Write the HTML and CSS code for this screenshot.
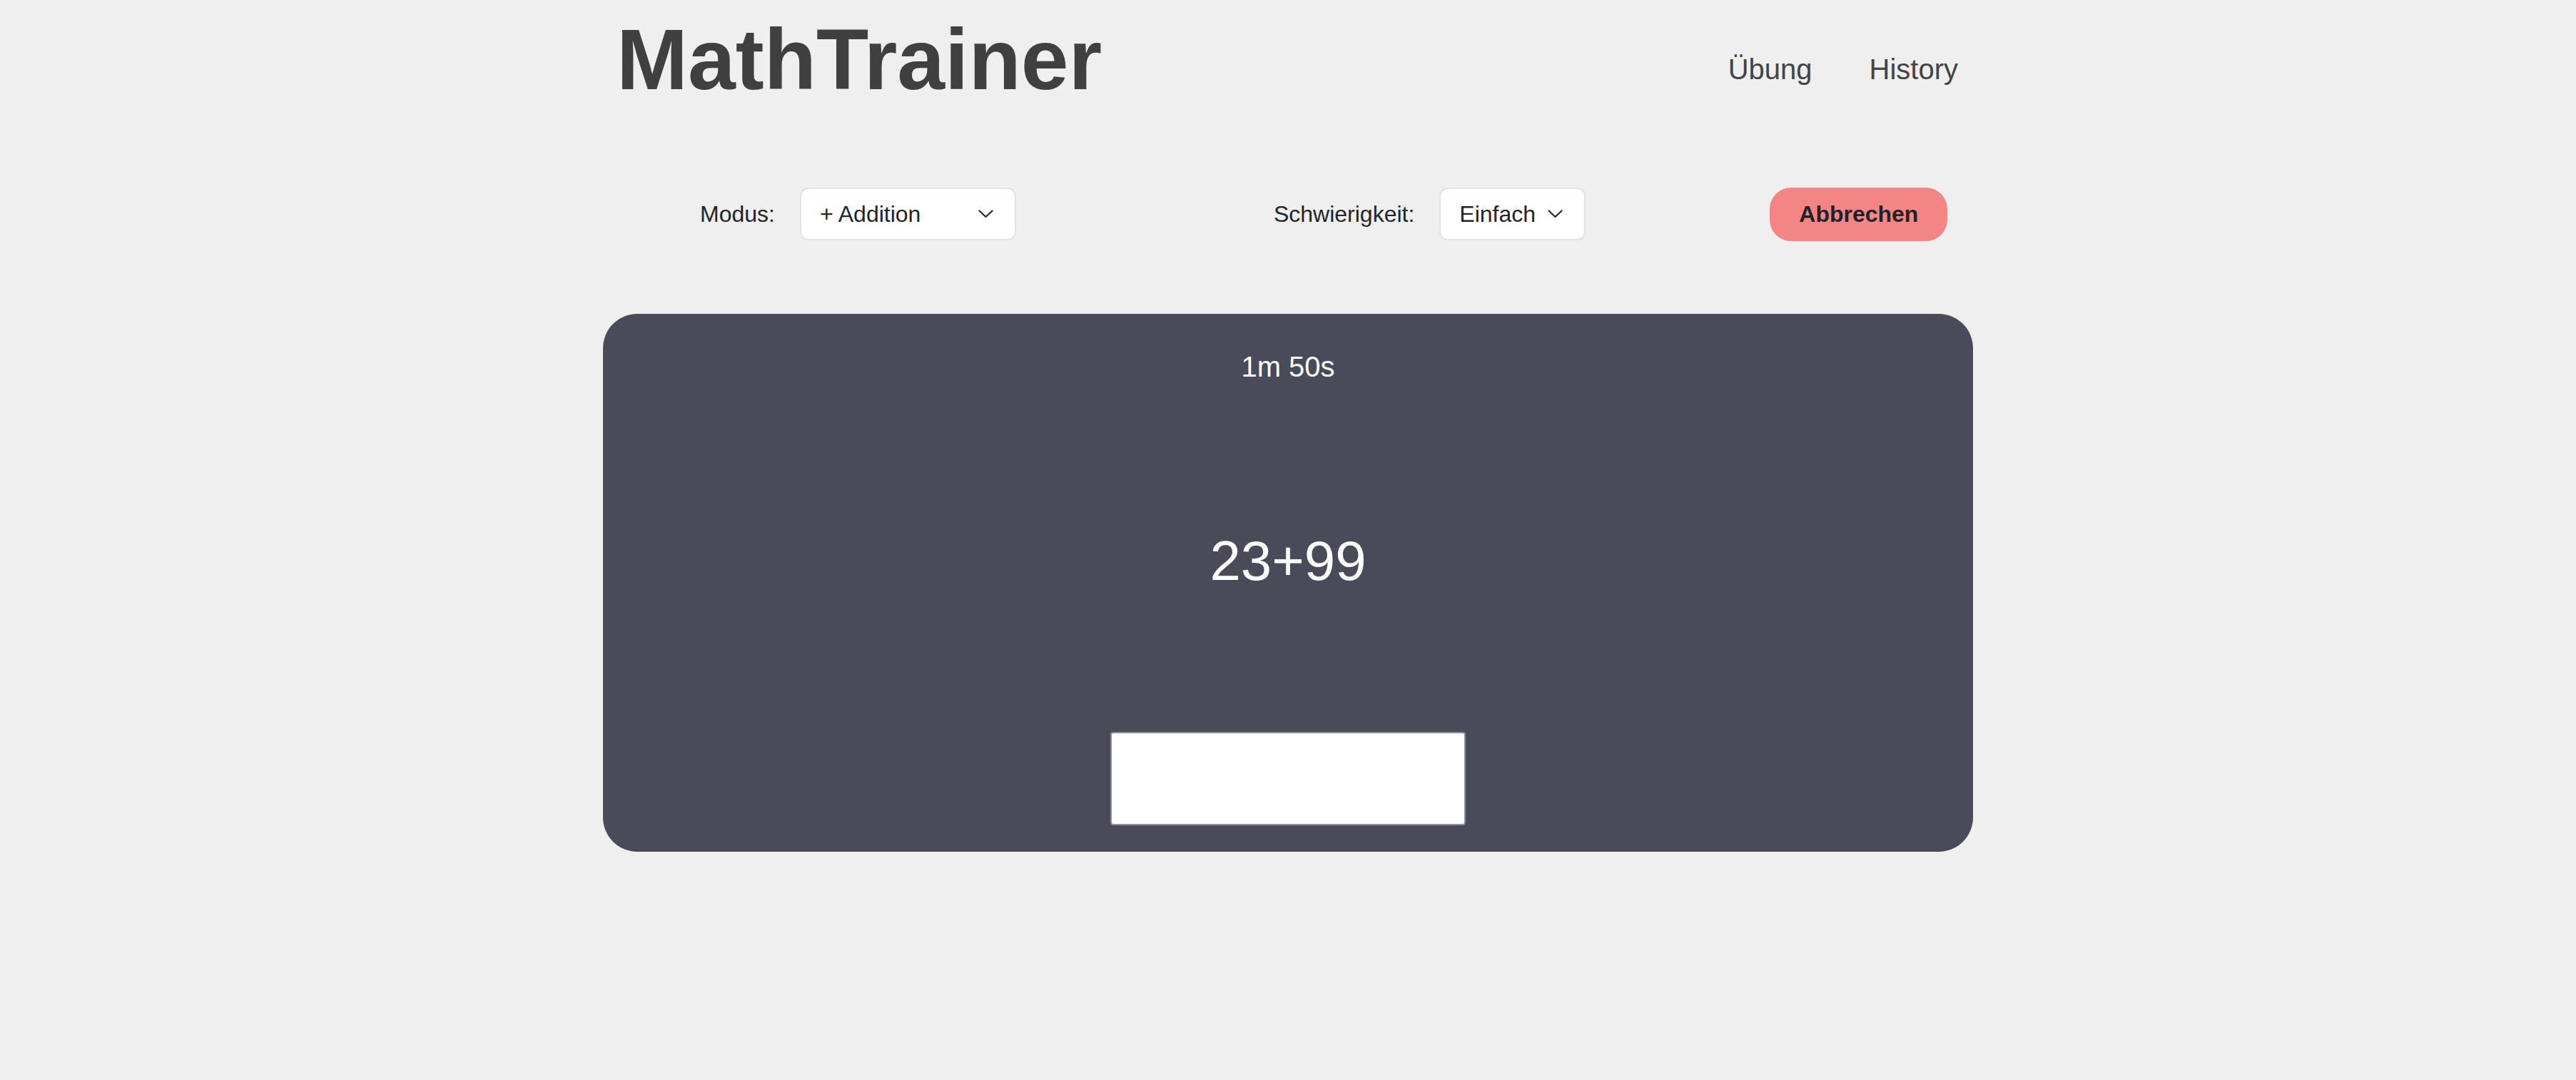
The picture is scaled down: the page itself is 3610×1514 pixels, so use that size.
FILE: index.html
```html
<!DOCTYPE html>
<html lang="de">
<head>
<meta charset="utf-8">
<title>MathTrainer</title>
<link rel="stylesheet" href="styles.css">
</head>
<body>
<div class="page">
  <header class="header">
    <h1 class="brand">MathTrainer</h1>
    <nav class="nav">
      <a class="nav-link">Übung</a>
      <a class="nav-link">History</a>
    </nav>
  </header>

  <div class="controls">
    <div class="field field-mode">
      <span class="label">Modus:</span>
      <div class="select select-mode">
        <span>+ Addition</span>
        <svg class="chev" width="21" height="12" viewBox="0 0 21 12"><polyline points="1.5,1.5 10.5,10 19.5,1.5" fill="none" stroke="#2b2d31" stroke-width="2.4" stroke-linecap="round" stroke-linejoin="round"/></svg>
      </div>
    </div>
    <div class="field field-level">
      <span class="label">Schwierigkeit:</span>
      <div class="select select-level">
        <span>Einfach</span>
        <svg class="chev" width="21" height="12" viewBox="0 0 21 12"><polyline points="1.5,1.5 10.5,10 19.5,1.5" fill="none" stroke="#2b2d31" stroke-width="2.4" stroke-linecap="round" stroke-linejoin="round"/></svg>
      </div>
    </div>
    <button class="cancel">Abbrechen</button>
  </div>

  <main class="card">
    <div class="timer">1m 50s</div>
    <div class="task">23+99</div>
    <input class="answer" type="text">
  </main>
</div>
</body>
</html>
```

FILE: styles.css
```css
html, body {
  margin: 0;
  padding: 0;
}
body {
  background: #efefef;
  font-family: "Liberation Sans", Arial, Helvetica, sans-serif;
  color: #212529;
}
.page {
  width: 1920px;
  margin: 0 auto;
}
.header {
  display: flex;
  justify-content: space-between;
  align-items: flex-start;
  padding: 23px 21px 0 19px;
  height: 120px;
}
.brand {
  margin: 0;
  font-size: 120px;
  line-height: 1;
  font-weight: 700;
  color: #404040;
  white-space: nowrap;
}
.nav {
  display: flex;
  gap: 80px;
  margin-top: 54px;
}
.nav-link {
  font-size: 40px;
  line-height: 1;
  color: #444444;
  text-decoration: none;
}
.controls {
  display: flex;
  align-items: center;
  height: 74px;
  margin-top: 120px;
  padding-left: 136px;
}
.field {
  display: flex;
  align-items: center;
  gap: 35px;
}
.field-level {
  margin-left: 361px;
}
.label {
  font-size: 32px;
  color: #212529;
}
.select {
  box-sizing: border-box;
  height: 74px;
  display: flex;
  align-items: center;
  justify-content: space-between;
  padding: 0 30px 0 26px;
  background: #ffffff;
  border: 2px solid #e0e3e7;
  border-radius: 12px;
  font-size: 32px;
  color: #212529;
}
.select-mode {
  width: 303px;
}
.select-level {
  width: 205px;
}
.chev {
  display: block;
}
.cancel {
  margin-left: 258px;
  width: 249px;
  height: 75px;
  border: none;
  border-radius: 30px;
  background: #f38684;
  color: #1f2328;
  font-family: "Liberation Sans", Arial, sans-serif;
  font-size: 32px;
  font-weight: 700;
  padding: 0;
}
.card {
  margin-top: 103px;
  background: #4a4b59;
  border-radius: 48px;
  display: flex;
  flex-direction: column;
  align-items: center;
  padding: 51px 0 37px;
  box-sizing: border-box;
  height: 754px;
}
.timer {
  font-size: 40px;
  line-height: 46px;
  color: #ffffff;
}
.task {
  margin-top: 210px;
  font-size: 78px;
  line-height: 1;
  color: #ffffff;
}
.answer {
  margin-top: 201px;
  box-sizing: border-box;
  width: 498px;
  height: 131px;
  background: #ffffff;
  border: 2px solid #8c8d9b;
  border-radius: 4px;
  outline: none;
  font-size: 40px;
  text-align: center;
}
```
